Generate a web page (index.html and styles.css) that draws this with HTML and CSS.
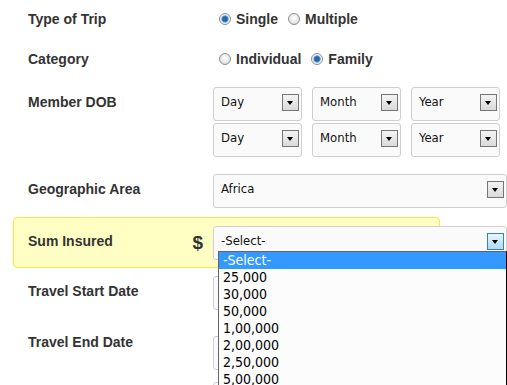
FILE: index.html
```html
<!DOCTYPE html>
<html lang="en">

<head>
    <meta charset="UTF-8">
    <meta name="viewport" content="width=device-width, initial-scale=1.0">
    <title>Travel Insurance Quote</title>
    <link rel="stylesheet" href="styles.css">
</head>

<body>
    <form class="quote-form">
        <div class="row row-trip">
            <div class="label">Type of Trip</div>
            <div class="field options">
                <span class="option"><span class="radio on"></span>Single</span>
                <span class="option"><span class="radio"></span>Multiple</span>
            </div>
        </div>

        <div class="row row-category">
            <div class="label">Category</div>
            <div class="field options">
                <span class="option"><span class="radio"></span>Individual</span>
                <span class="option"><span class="radio on"></span>Family</span>
            </div>
        </div>

        <div class="row row-dob">
            <div class="label pad">Member DOB</div>
            <div class="field dob">
                <div class="dob-line">
                    <div class="select small">Day<span class="arrow"></span></div>
                    <div class="select small">Month<span class="arrow"></span></div>
                    <div class="select small">Year<span class="arrow"></span></div>
                </div>
                <div class="dob-line">
                    <div class="select small">Day<span class="arrow"></span></div>
                    <div class="select small">Month<span class="arrow"></span></div>
                    <div class="select small">Year<span class="arrow"></span></div>
                </div>
            </div>
        </div>

        <div class="row row-area">
            <div class="label pad">Geographic Area</div>
            <div class="field">
                <div class="select wide">Africa<span class="arrow"></span></div>
            </div>
        </div>

        <div class="row highlight">
            <div class="label pad">
                <span>Sum Insured</span>
                <span class="currency">$</span>
            </div>
            <div class="field">
                <div class="select wide">-Select-<span class="arrow hover"></span>
                    <ul class="dropdown">
                        <li class="active">-Select-</li>
                        <li>25,000</li>
                        <li>30,000</li>
                        <li>50,000</li>
                        <li>1,00,000</li>
                        <li>2,00,000</li>
                        <li>2,50,000</li>
                        <li>5,00,000</li>
                    </ul>
                </div>
            </div>
        </div>

        <div class="row row-start">
            <div class="label pad">Travel Start Date</div>
            <div class="field">
                <div class="select wide"></div>
            </div>
        </div>

        <div class="row row-end">
            <div class="label pad">Travel End Date</div>
            <div class="field end-field">
                <div class="select wide"></div>
            </div>
        </div>

        <div class="row row-more">
            <div class="label"></div>
            <div class="field">
                <div class="select wide"></div>
            </div>
        </div>
    </form>
</body>

</html>
```

FILE: styles.css
```css
html,
body {
    margin: 0;
    overflow: hidden;
}

body {
    font-family: "Liberation Sans", Arial, sans-serif;
    color: #333;
    background: #fff;
}

.quote-form {
    padding: 11px 0 0 13px;
}

.row {
    display: flex;
    align-items: flex-start;
}

.label {
    flex: none;
    box-sizing: border-box;
    width: 200px;
    padding-left: 15px;
    font-size: 14px;
    line-height: 16px;
    font-weight: bold;
}

.label.pad {
    padding-top: 7px;
}

.field {
    flex: none;
}

/* radio groups */
.options {
    display: flex;
    align-items: center;
    margin-left: 6px;
    font-size: 14px;
    line-height: 16px;
    font-weight: bold;
}

.option {
    display: inline-flex;
    align-items: center;
    margin-right: 10px;
}

.radio {
    box-sizing: border-box;
    width: 12px;
    height: 12px;
    margin-right: 5px;
    border: 1px solid #8e8f8f;
    border-radius: 50%;
    background: radial-gradient(circle at 50% 40%, #ffffff 0, #ececec 45%, #cfcfcf 100%);
}

.radio.on {
    background: radial-gradient(circle at 50% 50%, #2a7bc4 0, #1a5f9e 2px, #4b93d0 3px, #e4e4e4 4px, #f7f7f7 5px, #dcdcdc 6px);
}

.row-trip {
    margin-bottom: 24px;
}

.row-category {
    margin-bottom: 20px;
}

/* select boxes */
.select {
    position: relative;
    box-sizing: border-box;
    height: 34px;
    padding-left: 7px;
    border: 1px solid #cfcfcf;
    border-radius: 3px;
    background: #fafafa;
    font-family: "DejaVu Sans Condensed", "DejaVu Sans", sans-serif;
    font-stretch: condensed;
    font-size: 13px;
    line-height: 28px;
    color: #111;
}

.select.small {
    width: 89px;
    margin-right: 10px;
}

.select.wide {
    width: 294px;
}

.arrow {
    position: absolute;
    top: 6px;
    right: 2px;
    box-sizing: border-box;
    width: 17px;
    height: 17px;
    border: 1px solid #767676;
    background: linear-gradient(#f4f4f4, #dadada);
}

.arrow::after {
    content: "";
    position: absolute;
    left: 4px;
    top: 6px;
    border-left: 3.5px solid transparent;
    border-right: 3.5px solid transparent;
    border-top: 4px solid #000;
}

.arrow.hover {
    border-color: #3c7fb1;
    background: linear-gradient(#eaf6fd, #a9dbf6);
}

.dob-line {
    display: flex;
    margin-bottom: 2px;
}

.row-dob {
    margin-bottom: 15px;
}

.row-area {
    margin-bottom: 9px;
}

/* highlighted row */
.highlight {
    box-sizing: border-box;
    width: 427px;
    height: 51px;
    padding-top: 8px;
    border: 1px solid #eeee3c;
    border-radius: 4px;
    background: #ffffc4;
}

.highlight .label {
    display: flex;
    justify-content: space-between;
    width: 199px;
    padding-left: 14px;
    padding-right: 10px;
}

.currency {
    font-size: 19px;
    line-height: 20px;
}

.dropdown {
    position: absolute;
    z-index: 5;
    top: 24px;
    left: 4px;
    width: 289px;
    margin: 0;
    padding: 0;
    list-style: none;
    box-sizing: border-box;
    border: 1px solid #646464;
    border-right-color: #000;
    background: #fcfcfc;
    font-size: 14px;
    line-height: 17px;
    color: #000;
}

.dropdown li {
    padding-left: 4px;
    height: 17px;
}

.dropdown li.active {
    background: #3399ff;
    color: #fff;
}

.row-start {
    margin-top: 8px;
    margin-bottom: 17px;
}

.end-field {
    margin-top: 9px;
}

.row-end {
    margin-bottom: 12px;
}
```
